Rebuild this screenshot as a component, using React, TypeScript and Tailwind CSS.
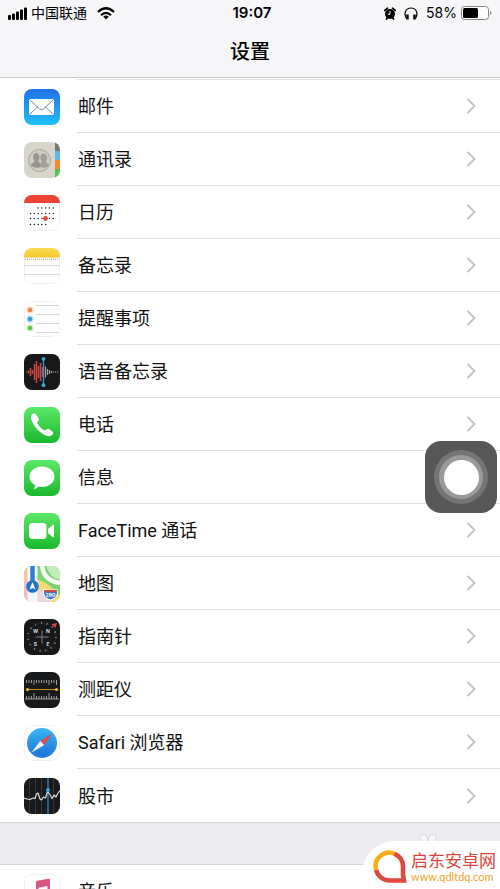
import type { ReactNode } from "react";

function AppIcon({ children }: { children: ReactNode }) {
  return (
    <svg viewBox="0 0 36 36" className="size-9 shrink-0 overflow-hidden rounded-lg" aria-hidden="true">
      {children}
    </svg>
  );
}

function Outline() {
  return <rect x="0.5" y="0.5" width="35" height="35" rx="7.5" fill="none" stroke="#f0f0f0" />;
}

function MailIcon() {
  return (
    <AppIcon>
      <defs>
        <linearGradient id="mail" x1="0" y1="0" x2="0" y2="1">
          <stop offset="0" stopColor="#2170e8" />
          <stop offset="1" stopColor="#20bff8" />
        </linearGradient>
      </defs>
      <rect width="36" height="36" fill="url(#mail)" />
      <rect x="5" y="10" width="25" height="16" rx="1.5" fill="#fff" />
      <path d="M5.500 10.500 15.500 20q2 1.700 4 0l10-9.500M5.500 25.500l8.500-8M29.500 25.500l-8.500-8" fill="none" stroke="#6f8e9f" strokeWidth="1" />
    </AppIcon>
  );
}

function ContactsIcon() {
  return (
    <AppIcon>
      <rect width="36" height="36" fill="#d8d6cb" />
      <rect x="31" width="5" height="9" fill="#77796f" />
      <rect x="31" y="9" width="5" height="9" fill="#5fb7ec" />
      <rect x="31" y="18" width="5" height="9" fill="#f08c2c" />
      <rect x="31" y="27" width="5" height="9" fill="#4cc84c" />
      <circle cx="15.500" cy="18.500" r="11" fill="#cfcdc4" stroke="#a5a39b" strokeWidth="1" />
      <path d="M6.500 23c1-2 4-2 4-4-2-2-2-8 1.500-8s4.500 5 2.500 8c0 2 3 2 4 5-3 3-10 2-12-1Z" fill="#99968f" />
      <path d="M15 24c1-3 2.500-3 2.500-5-2-3-1.500-7.500 2-7.500s4.500 5 2.500 7.500c0 2 2 2 3 4-2 3-6 4-10 1Z" fill="#a29f98" />
    </AppIcon>
  );
}

function CalendarIcon() {
  return (
    <AppIcon>
      <rect width="36" height="36" fill="#fff" />
      <Outline />
      <rect width="36" height="8" fill="#ec4333" />
      <g stroke="#222" strokeWidth="1.500" strokeLinecap="round" strokeDasharray="0 3.800">
        <path d="M14 13h16M6.500 18.500h24M6.500 23.500h24M6.500 29.500h16" />
      </g>
      <circle cx="21.500" cy="23.500" r="2.400" fill="#d94b3c" />
    </AppIcon>
  );
}

function NotesIcon() {
  return (
    <AppIcon>
      <defs>
        <linearGradient id="notes" x1="0" y1="0" x2="0" y2="1">
          <stop offset="0" stopColor="#fbdc58" />
          <stop offset="1" stopColor="#f4c62c" />
        </linearGradient>
      </defs>
      <rect width="36" height="36" fill="#fff" />
      <Outline />
      <rect width="36" height="9.500" fill="url(#notes)" />
      <path d="M1 11.200h34" stroke="#a89b70" strokeWidth="1" strokeDasharray="1 1" />
      <path d="M0 17.500h36M0 26.500h36" stroke="#d2d2d2" strokeWidth="0.8" />
    </AppIcon>
  );
}

function RemindersIcon() {
  return (
    <AppIcon>
      <rect width="36" height="36" fill="#fff" />
      <Outline />
      <path d="M12 4.500h22M12 13.500h23M12 22.500h23M12 31.500h22" stroke="#d0d0d0" strokeWidth="0.9" />
      <g fillOpacity="0.3">
        <circle cx="6" cy="9" r="3.800" fill="#ef9450" />
        <circle cx="6" cy="18" r="3.800" fill="#3fa4dd" />
        <circle cx="6" cy="27" r="3.800" fill="#74cf52" />
      </g>
      <circle cx="6" cy="9" r="2.300" fill="#e98a48" />
      <circle cx="6" cy="18" r="2.300" fill="#329bd6" />
      <circle cx="6" cy="27" r="2.300" fill="#69c548" />
    </AppIcon>
  );
}

function VoiceIcon() {
  return (
    <AppIcon>
      <rect width="36" height="36" fill="#17181a" />
      <path d="M2.500 17.500v1M4.500 16.500v3M6.500 14v8M8.500 16v4M10.500 10v16M12.500 7v22M14.500 12v12M16.500 9v18M18.500 13v10" stroke="#c94742" strokeWidth="1.500" />
      <path d="M21.500 12.500v11M23.500 15v6M25.500 16v4M27.500 17v2M29.500 17.500v1M31.500 17.500v1M33.500 17.500v1" stroke="#a5a5a7" strokeWidth="1.200" />
      <path d="M19.500 4.500v27" stroke="#3299cc" strokeWidth="1.400" />
      <circle cx="19.500" cy="4.800" r="1.900" fill="#42a8d7" />
      <circle cx="19.500" cy="31.200" r="1.900" fill="#42a8d7" />
    </AppIcon>
  );
}

function GreenBase() {
  return (
    <>
      <defs>
        <linearGradient id="green" x1="0" y1="0" x2="0" y2="1">
          <stop offset="0" stopColor="#5de866" />
          <stop offset="1" stopColor="#19b92d" />
        </linearGradient>
      </defs>
      <rect width="36" height="36" fill="url(#green)" />
    </>
  );
}

function PhoneIcon() {
  return (
    <AppIcon>
      <GreenBase />
      <path d="M8 7.500c1.300-1.500 2.800-1.700 3.700-.5l2.700 4c.8 1.300.5 2.200-.5 3.200-.9.900-.9 1.500-.3 2.500 1.700 2.800 3.500 4.600 6 6.200 1 .7 1.700.6 2.500-.3 1-1.100 2-1.200 3.200-.4l3 2.200c1.400 1 1.200 2.300.1 3.400-2.300 2.500-6.800 1.500-11.200-2-4.500-3.600-8-7.800-9.700-12.500C6.600 11 6.700 9 8 7.500Z" fill="#fff" />
    </AppIcon>
  );
}

function MessagesIcon() {
  return (
    <AppIcon>
      <GreenBase />
      <path d="M18 6.500c7 0 12.500 4.500 12.500 10.200S25 27 18 27c-1.200 0-2.300-.1-3.300-.4-1.400 1.500-3.300 2.300-5.200 2.500 1-1.200 1.600-2.500 1.500-4-3.400-1.800-5.500-4.900-5.500-8.400C5.500 11 11 6.500 18 6.500Z" fill="#fff" />
    </AppIcon>
  );
}

function FaceTimeIcon() {
  return (
    <AppIcon>
      <GreenBase />
      <rect x="5" y="10" width="17.500" height="16" rx="3.500" fill="#fff" />
      <path d="M24 16l4.700-4q1.300-1 1.300.7v10.600q0 1.700-1.300.7L24 20Z" fill="#fff" />
    </AppIcon>
  );
}

function MapsIcon() {
  return (
    <AppIcon>
      <rect width="36" height="36" fill="#7fd472" />
      <path d="M0 0h5v17H0Z" fill="#f3c79c" />
      <path d="M0 15h5v21H0Z" fill="#f2b9cb" />
      <path d="M12 13Q26 17 36 30v6H12Z" fill="#f7dc7c" />
      <path d="M12 22Q22 24 28 36H12Z" fill="#e9d9dc" />
      <path d="M22 0h14v14Q26 12 22 0Z" fill="#c4ecbd" />
      <path d="M18 0q2 15 18 17" fill="none" stroke="#f6f8f3" strokeWidth="4.500" />
      <path d="M3.500 0h10v36h-10Z" fill="#f4f6f8" />
      <path d="M8.500 0v20" stroke="#2f7ed6" strokeWidth="4.500" />
      <circle cx="8.500" cy="20.500" r="6.300" fill="#2472ce" />
      <path d="m8.500 16 3 7.500-3-1.500-3 1.500Z" fill="#fff" />
      <path d="M20 23.500q6.500 1.500 13 0 2.500 8-6.500 10.500-9-2.500-6.500-10.500Z" fill="#377abe" stroke="#fff" strokeWidth="1" />
      <path d="M20.300 24h12.400v2.200H20.300Z" fill="#cf4b49" />
      <text x="26.500" y="31" textAnchor="middle" fontFamily="Inter" fontWeight="700" fontSize="5" fill="#fff">280</text>
    </AppIcon>
  );
}

function CompassIcon() {
  return (
    <AppIcon>
      <rect width="36" height="36" fill="#17181a" />
      <circle cx="18" cy="18" r="14" fill="none" stroke="#b0b0b0" strokeWidth="2" strokeDasharray="0.8 5.060" />
      <circle cx="18" cy="18" r="14" fill="none" stroke="#555" strokeWidth="1" strokeDasharray="0.5 1.450" />
      <path d="M18 11.500v13M11.500 18h13" stroke="#8d8d8d" strokeWidth="0.9" />
      <path d="m33 4-5.500 1.300 3.800 4Z" fill="#e13f3c" />
      <g fill="#ddd" fontFamily="Inter" fontWeight="700" fontSize="5" textAnchor="middle">
        <text x="11.500" y="13.500">W</text>
        <text x="24" y="13.500">N</text>
        <text x="11.500" y="27">S</text>
        <text x="24" y="27">E</text>
      </g>
    </AppIcon>
  );
}

function MeasureIcon() {
  return (
    <AppIcon>
      <rect width="36" height="36" fill="#18191a" />
      <path d="M2.500 8v3M5 8v3M7.500 8v3M10 8v5M12.500 8v3M15 8v3M17.500 8v3M20 8v3M22.500 8v3M25 8v5M27.500 8v3M30 8v3M32.500 8v5M2.500 24v3M5 24v3M7.500 24v3M10 21v6M12.500 24v3M15 24v3M17.500 24v3M20 24v3M22.500 24v3M25 21v6M27.500 24v3M30 24v3M32.500 24v3M1 27h34" stroke="#aaa" strokeWidth="0.9" />
      <path d="M3 17.500h30" stroke="#c98f1c" strokeWidth="1" />
      <circle cx="3.500" cy="17.500" r="1.600" fill="#f3bd27" />
      <circle cx="32.500" cy="17.500" r="1.600" fill="#f3bd27" />
    </AppIcon>
  );
}

function SafariIcon() {
  return (
    <AppIcon>
      <defs>
        <linearGradient id="safari" x1="0" y1="0" x2="0" y2="1">
          <stop offset="0" stopColor="#36b7f2" />
          <stop offset="1" stopColor="#1e6fd8" />
        </linearGradient>
      </defs>
      <rect width="36" height="36" fill="#fff" />
      <Outline />
      <circle cx="18" cy="18" r="15" fill="url(#safari)" />
      <circle cx="18" cy="18" r="13.500" fill="none" stroke="#8fd0f2" strokeWidth="0.8" strokeDasharray="0.5 2" />
      <path d="m28.500 8.500-8.300 11.500-4-4Z" fill="#e14a50" />
      <path d="m7.500 27.500 8.700-11.500 4 4Z" fill="#f5f7fa" />
    </AppIcon>
  );
}

function StocksIcon() {
  return (
    <AppIcon>
      <rect width="36" height="36" fill="#191a1d" />
      <path d="M5.500 0v36M11.500 0v36M17.500 0v36M29.500 0v36" stroke="#34363a" strokeWidth="1" />
      <path d="M24 0v36" stroke="#287fb0" strokeWidth="1.500" />
      <path d="m0 20 3 1 3 .5 3-1.500 2 .5 1.500-4.500 1.500-1 2 6 1.500 1 2-3 2 1 2-6.500 1 1 2 3 1.500 3 2-3.500 2 2 2-4 2-2.500" fill="none" stroke="#ddd" strokeWidth="1.200" strokeLinejoin="round" />
      <circle cx="24" cy="12" r="2" fill="#3b9ed4" />
    </AppIcon>
  );
}

function MusicIcon() {
  return (
    <AppIcon>
      <defs>
        <linearGradient id="music" x1="0" y1="0" x2="0" y2="1">
          <stop offset="0" stopColor="#e95370" />
          <stop offset="1" stopColor="#8b65dc" />
        </linearGradient>
      </defs>
      <rect width="36" height="36" fill="#fff" />
      <Outline />
      <path d="M12 8.200q0-1.200 1.200-1.500l11.500-2q1.300-.2 1.300 1V24c0 5-7 6-7 2 0-3 4.500-3 4.500-5v-9l-9 1.700V27c0 5-7 6-7 2 0-3 4.500-3 4.500-5Z" fill="url(#music)" />
    </AppIcon>
  );
}

const rows: { label: string; icon: ReactNode }[] = [
  { label: "邮件", icon: <MailIcon /> },
  { label: "通讯录", icon: <ContactsIcon /> },
  { label: "日历", icon: <CalendarIcon /> },
  { label: "备忘录", icon: <NotesIcon /> },
  { label: "提醒事项", icon: <RemindersIcon /> },
  { label: "语音备忘录", icon: <VoiceIcon /> },
  { label: "电话", icon: <PhoneIcon /> },
  { label: "信息", icon: <MessagesIcon /> },
  { label: "FaceTime 通话", icon: <FaceTimeIcon /> },
  { label: "地图", icon: <MapsIcon /> },
  { label: "指南针", icon: <CompassIcon /> },
  { label: "测距仪", icon: <MeasureIcon /> },
  { label: "Safari 浏览器", icon: <SafariIcon /> },
  { label: "股市", icon: <StocksIcon /> },
];

function SettingsRow({ label, icon, last }: { label: string; icon: ReactNode; last?: boolean }) {
  return (
    <li>
      <button type="button" className="flex h-[53px] w-full items-stretch pl-6 text-left">
        <span className="flex w-[53px] shrink-0 items-center">{icon}</span>
        <span
          className={
            last
              ? "flex flex-1 items-center justify-between pr-6 pl-px"
              : "flex flex-1 items-center justify-between border-b border-[#dedee0] pr-6 pl-px"
          }
        >
          <span className="pt-0.5 font-['Roboto','Noto_Sans_CJK_SC',sans-serif] text-lg text-[#111]">{label}</span>
          <svg viewBox="0 0 10 16" className="h-4 w-2.5" fill="none" stroke="#c4c4c8" strokeWidth="2" aria-hidden="true">
            <path d="m1.500 1 7 7-7 7" />
          </svg>
        </span>
      </button>
    </li>
  );
}

function StatusBar() {
  return (
    <div className="grid h-[26px] grid-cols-3 items-center px-2 text-black">
      <div className="flex items-center gap-1">
        <svg viewBox="0 0 19 13" className="h-[13px] w-[19px]" aria-hidden="true">
          <rect x="0" y="8" width="3" height="5" rx="1" />
          <rect x="4" y="6.500" width="3" height="6.500" rx="1" />
          <rect x="8" y="4.500" width="3" height="8.500" rx="1" />
          <rect x="12" y="2.500" width="3" height="10.500" rx="1" />
          <rect x="16" y="0.500" width="3" height="12.500" rx="1" />
        </svg>
        <span className="text-sm">中国联通</span>
        <svg viewBox="0 0 18 13" className="ml-1.5 h-[13px] w-[18px]" fill="none" stroke="currentColor" strokeWidth="2.200" aria-hidden="true">
          <path d="M1 5Q9-2.500 17 5M4 8.200q5-4.600 10 0" />
          <path d="M9 12.500 6.200 9.700q2.800-2.200 5.600 0Z" fill="currentColor" stroke="none" />
        </svg>
      </div>
      <span className="pl-1 text-center text-[15px] font-semibold">19:07</span>
      <div className="flex items-center justify-end gap-2">
        <svg viewBox="0 0 12 13" className="h-[13px] w-3" aria-hidden="true">
          <circle cx="6" cy="7" r="5" />
          <path d="m.8 3.500 2.700-2.300M11.200 3.500 8.500 1.200M2.500 12l1-1.500M9.500 12l-1-1.500" stroke="#000" strokeWidth="1.700" strokeLinecap="round" />
          <path d="M6 4v3.200H3.800" stroke="#fff" strokeWidth="1" fill="none" />
        </svg>
        <svg viewBox="0 0 14 13" className="h-[13px] w-3.5" fill="none" stroke="currentColor" strokeWidth="1.200" aria-hidden="true">
          <path d="M2.500 11.500C-.8 6 2 1 7 1s7.800 5 4.500 10.500" />
          <path d="M3.500 7.500v5M10.500 7.500v5" strokeWidth="2.400" />
        </svg>
        <span className="flex items-center gap-1">
          <span className="text-sm">58%</span>
          <svg viewBox="0 0 31 14" className="h-3.5 w-[31px]" aria-hidden="true">
            <rect x="0.500" y="0.500" width="27" height="13" rx="3" fill="#fff" stroke="#858585" />
            <rect x="2" y="2" width="15" height="10" rx="1.500" />
            <path d="M29 5v4q1.500-.5 1.500-2T29 5Z" fill="#858585" />
          </svg>
        </span>
      </div>
    </div>
  );
}

export default function App() {
  return (
    <div className="relative h-screen overflow-hidden bg-white font-['Inter','Noto_Sans_CJK_SC',sans-serif]">
      <header className="border-b border-[#c9c9cc] bg-[#f6f6f8]">
        <StatusBar />
        <h1 className="flex h-[51px] items-center justify-center text-xl font-medium text-black">设置</h1>
      </header>

      <main>
        <div className="ml-[77px] h-0.5 border-b border-[#e4e4e6]" />
        <ul>
          {rows.map((row, i) => (
            <SettingsRow key={row.label} label={row.label} icon={row.icon} last={i === rows.length - 1} />
          ))}
        </ul>
        <div className="h-[43px] border-y border-[#d5d5d9] bg-[#ececf1]" />
        <ul>
          <SettingsRow label="音乐" icon={<MusicIcon />} />
        </ul>
      </main>

      <button
        type="button"
        aria-label="AssistiveTouch"
        className="absolute top-[441px] right-[3px] flex size-[72px] items-center justify-center rounded-2xl bg-[#575757]"
      >
        <span className="flex size-[54px] items-center justify-center rounded-full bg-[#757575]">
          <span className="flex size-11 items-center justify-center rounded-full bg-[#9a9a9a]">
            <span className="size-[35px] rounded-full bg-white" />
          </span>
        </span>
      </button>

      <svg viewBox="0 0 20 10" className="absolute right-[62px] bottom-12 h-2.5 w-5" fill="#f6f6f8" stroke="#dcdce0" aria-hidden="true">
        <path d="M3 10Q1 4 5 3t5 7M10 10q1-7 5-7t3 7" />
      </svg>

      <aside className="absolute right-0 bottom-0 flex h-12 w-[138px] items-center gap-1 rounded-tl-[32px] bg-white pt-1 pl-[11px]">
        <svg viewBox="0 0 34 34" className="size-[34px] shrink-0" fill="none" strokeWidth="4.500" aria-hidden="true">
          <path d="M3.200 20A13.500 13.500 0 0 1 22 4" stroke="#f9ae17" />
          <path d="M21.500 3.800C27 6 30 11 30 16.500V25l1 5.500H17C10 30.500 4.500 26 3.200 20" stroke="#e0483e" />
        </svg>
        <div className="flex flex-col whitespace-nowrap">
          <span className="text-[17px] leading-5 text-[#dc453d]">启东安卓网</span>
          <a href="#top" className="font-['Lato',sans-serif] text-[11px] leading-3 text-[#f2a32c]">
            www.qdltdq.com
          </a>
        </div>
      </aside>
    </div>
  );
}
